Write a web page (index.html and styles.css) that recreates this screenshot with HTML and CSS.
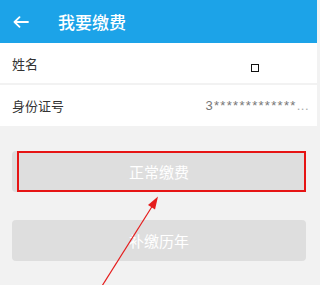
FILE: index.html
```html
<!DOCTYPE html>
<html lang="zh-CN">
<head>
<meta charset="utf-8">
<title>我要缴费</title>
<link rel="stylesheet" href="styles.css">
</head>
<body>
<div class="page">
  <header class="topbar">
    <svg class="back" width="16" height="12" viewBox="0 0 16 12">
      <path d="M15 6H1.5M6.5 1.2L1.5 6l5 4.8" fill="none" stroke="#fff" stroke-width="1.8" stroke-linecap="round" stroke-linejoin="round"/>
    </svg>
    <h1 class="title">我要缴费</h1>
  </header>
  <div class="row row-name">
    <span class="label">姓名</span>
    <span class="tofu"></span>
  </div>
  <div class="row row-id">
    <span class="label">身份证号</span>
    <span class="value">3*************<span class="dots">...</span></span>
  </div>
  <div class="actions">
    <button class="btn">正常缴费</button>
    <button class="btn">补缴历年</button>
  </div>
  <div class="highlight"></div>
  <svg class="pointer" width="317" height="285" viewBox="0 0 317 285">
    <line x1="102" y1="286" x2="153" y2="205" stroke="#e51c1c" stroke-width="1.2"/>
    <polygon points="158,196.5 155,209.5 148,205" fill="#e51c1c"/>
  </svg>
</div>
</body>
</html>
```

FILE: styles.css
```css
html, body {
  margin: 0;
  padding: 0;
}
body {
  background: #f2f2f2;
  font-family: "Noto Sans CJK SC", "Noto Sans", "Liberation Sans", sans-serif;
  width: 317px;
  height: 285px;
  overflow: hidden;
}
.page {
  position: relative;
  width: 317px;
  height: 285px;
}
.topbar {
  height: 43px;
  background: #1ca3e8;
  display: flex;
  align-items: center;
  padding-left: 13px;
  box-sizing: border-box;
}
.back {
  display: block;
}
.title {
  margin: 0 0 0 29px;
  font-size: 17px;
  font-weight: 500;
  color: #fff;
  line-height: 1;
}
.row {
  background: #fff;
  display: flex;
  align-items: center;
  padding: 0 12px;
  box-sizing: border-box;
}
.row-name {
  height: 40px;
  margin-bottom: 2px;
}
.row-id {
  height: 41px;
  padding-right: 8px;
}
.label {
  font-size: 13px;
  color: #333;
}
.tofu {
  margin-left: auto;
  margin-right: 46px;
  margin-top: 10px;
  width: 8px;
  height: 8px;
  border: 1.5px solid #111;
  box-sizing: border-box;
}
.value {
  margin-left: auto;
  font-family: "Liberation Sans", sans-serif;
  font-size: 13px;
  color: #777;
  letter-spacing: 1.3px;
}
.dots {
  color: #aaa;
  letter-spacing: 0.5px;
}
.actions {
  padding: 25px 11px 0 12px;
  display: flex;
  flex-direction: column;
  gap: 28px;
}
.btn {
  height: 41px;
  border: none;
  border-radius: 4px;
  background: #dedede;
  color: #fff;
  font-family: "Noto Sans CJK SC", "Noto Sans", sans-serif;
  font-size: 15px;
  padding: 0;
}
.highlight {
  position: absolute;
  left: 17px;
  top: 151px;
  width: 289px;
  height: 41px;
  border-width: 2px;
  border-style: solid;
  border-color: rgb(230, 20, 20);
  box-sizing: border-box;
}
.pointer {
  position: absolute;
  left: 0;
  top: 0;
  pointer-events: none;
}
```
